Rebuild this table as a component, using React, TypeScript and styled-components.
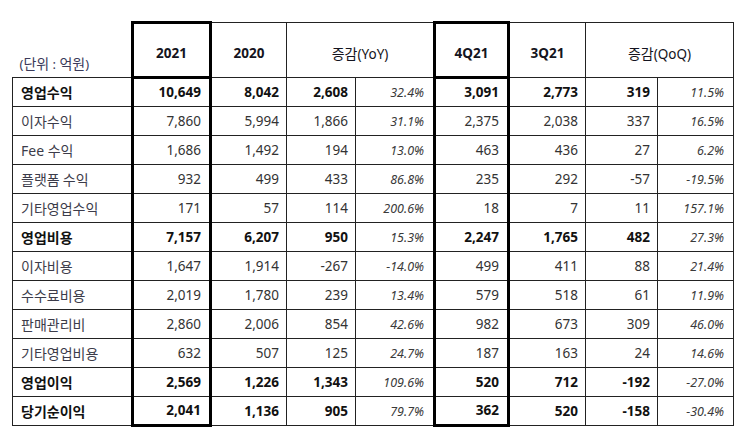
import React from "react";
import styled, { createGlobalStyle, css } from "styled-components";

const Global = createGlobalStyle`
  html, body { margin: 0; padding: 0; background: #fff; }
  body { font-family: "Noto Sans", "Noto Sans CJK KR", sans-serif; }
`;

const Page = styled.div`
  width: 745px;
  height: 432px;
  padding: 21px 0 0 12px;
  box-sizing: border-box;
  overflow: hidden;
`;

const Table = styled.table`
  border-collapse: collapse;
  table-layout: fixed;
  width: 721px;
  font-size: 13px;
  color: #1c1c1c;
`;

const THICK = "3px solid #000";
const THIN = "1px solid #222";

const Hangul = styled.span`
  font-family: "Noto Sans CJK KR", sans-serif;
  font-size: 14px;
`;

const HeadCell = styled.th<{ $thick?: boolean }>`
  height: 55px;
  padding: 5px 0 0;
  box-sizing: border-box;
  border: ${THIN};
  font-weight: 400;
  font-size: 13.5px;
  text-align: center;
  vertical-align: middle;
  color: #141420;
  ${(p) =>
    p.$thick &&
    css`
      border: ${THICK};
      font-weight: 700;
    `}
`;

const YearCell = styled(HeadCell)`
  font-weight: 700;
`;

const UnitCell = styled.th`
  border: none;
  border-bottom: ${THIN};
  padding: 0 0 4px 7px;
  text-align: left;
  vertical-align: bottom;
  font-weight: 400;
  color: #3a3a5a;
  font-size: 13px;
  white-space: nowrap;
`;

const Row = styled.tr<{ $bold?: boolean }>`
  height: 29px;
  font-weight: ${(p) => (p.$bold ? 700 : 400)};
`;

const Label = styled.td<{ $bold?: boolean }>`
  border: ${THIN};
  padding: 0 0 1px 8px;
  text-align: left;
  white-space: nowrap;
  font-size: 14px;
  color: ${(p) => (p.$bold ? "#111" : "#3c3c4a")};
`;

const Num = styled.td<{ $thick?: boolean; $last?: boolean; $bold?: boolean }>`
  border: ${THIN};
  padding: 0 7px 1px 0;
  text-align: right;
  white-space: nowrap;
  font-size: 13.5px;
  color: ${(p) => (p.$bold ? "#111" : "#333")};
  ${(p) =>
    p.$thick &&
    css`
      border-left: ${THICK};
      border-right: ${THICK};
      padding-right: 8px;
    `}
  ${(p) =>
    p.$thick &&
    p.$last &&
    css`
      border-bottom: ${THICK};
    `}
`;

const Pct = styled.td`
  border: ${THIN};
  padding: 0 9px 0 0;
  text-align: right;
  font-style: italic;
  font-weight: 400;
  font-size: 12.5px;
  color: #3a3a3a;
  white-space: nowrap;
`;

type R = { label: React.ReactNode; key: string; bold?: boolean; v: string[] };

const H = (s: string) => <Hangul>{s}</Hangul>;

const rows: R[] = [
  { key: "a", label: H("영업수익"), bold: true, v: ["10,649", "8,042", "2,608", "32.4%", "3,091", "2,773", "319", "11.5%"] },
  { key: "b", label: H("이자수익"), v: ["7,860", "5,994", "1,866", "31.1%", "2,375", "2,038", "337", "16.5%"] },
  { key: "c", label: <>Fee {H("수익")}</>, v: ["1,686", "1,492", "194", "13.0%", "463", "436", "27", "6.2%"] },
  { key: "d", label: H("플랫폼 수익"), v: ["932", "499", "433", "86.8%", "235", "292", "-57", "-19.5%"] },
  { key: "e", label: H("기타영업수익"), v: ["171", "57", "114", "200.6%", "18", "7", "11", "157.1%"] },
  { key: "f", label: H("영업비용"), bold: true, v: ["7,157", "6,207", "950", "15.3%", "2,247", "1,765", "482", "27.3%"] },
  { key: "g", label: H("이자비용"), v: ["1,647", "1,914", "-267", "-14.0%", "499", "411", "88", "21.4%"] },
  { key: "h", label: H("수수료비용"), v: ["2,019", "1,780", "239", "13.4%", "579", "518", "61", "11.9%"] },
  { key: "i", label: H("판매관리비"), v: ["2,860", "2,006", "854", "42.6%", "982", "673", "309", "46.0%"] },
  { key: "j", label: H("기타영업비용"), v: ["632", "507", "125", "24.7%", "187", "163", "24", "14.6%"] },
  { key: "k", label: H("영업이익"), bold: true, v: ["2,569", "1,226", "1,343", "109.6%", "520", "712", "-192", "-27.0%"] },
  { key: "l", label: H("당기순이익"), bold: true, v: ["2,041", "1,136", "905", "79.7%", "362", "520", "-158", "-30.4%"] },
];

const widths = [120, 78, 76, 69, 79, 74, 77, 72, 76];

export default function App() {
  return (
    <Page>
      <Global />
      <Table>
        <colgroup>
          {widths.map((w, i) => (
            <col key={i} style={{ width: w }} />
          ))}
        </colgroup>
        <thead>
          <tr>
            <UnitCell>({H("단위")} : {H("억원")})</UnitCell>
            <HeadCell $thick>2021</HeadCell>
            <YearCell>2020</YearCell>
            <HeadCell colSpan={2}>{H("증감")}(YoY)</HeadCell>
            <HeadCell $thick>4Q21</HeadCell>
            <YearCell>3Q21</YearCell>
            <HeadCell colSpan={2}>{H("증감")}(QoQ)</HeadCell>
          </tr>
        </thead>
        <tbody>
          {rows.map((r, ri) => {
            const last = ri === rows.length - 1;
            return (
              <Row key={r.key} $bold={r.bold}>
                <Label $bold={r.bold}>{r.label}</Label>
                <Num $thick $last={last} $bold={r.bold}>{r.v[0]}</Num>
                <Num $bold={r.bold}>{r.v[1]}</Num>
                <Num $bold={r.bold}>{r.v[2]}</Num>
                <Pct>{r.v[3]}</Pct>
                <Num $thick $last={last} $bold={r.bold}>{r.v[4]}</Num>
                <Num $bold={r.bold}>{r.v[5]}</Num>
                <Num $bold={r.bold}>{r.v[6]}</Num>
                <Pct>{r.v[7]}</Pct>
              </Row>
            );
          })}
        </tbody>
      </Table>
    </Page>
  );
}
